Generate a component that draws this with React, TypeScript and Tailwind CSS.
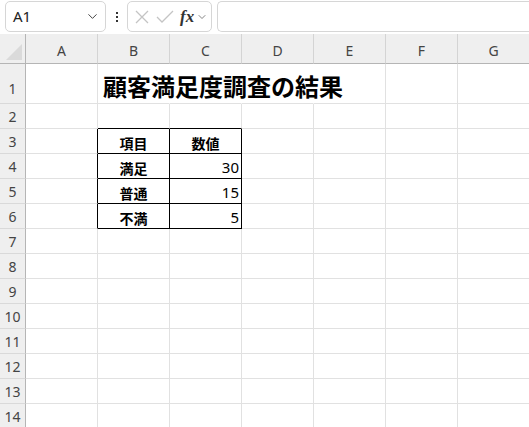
import { ChevronDown } from 'lucide-react';

const cols = ['A', 'B', 'C', 'D', 'E', 'F', 'G'];
const rows = Array.from({ length: 14 }, (_, i) => i + 1);

const font = { fontFamily: '"Noto Sans", "Noto Sans CJK JP", sans-serif' };

type Cell = { text?: string; bold?: boolean; align?: 'left' | 'center' | 'right' };

const data: Record<string, Cell> = {
  B3: { text: '項目', bold: true, align: 'center' },
  C3: { text: '数値', bold: true, align: 'center' },
  B4: { text: '満足', bold: true, align: 'center' },
  C4: { text: '30', align: 'right' },
  B5: { text: '普通', bold: true, align: 'center' },
  C5: { text: '15', align: 'right' },
  B6: { text: '不満', bold: true, align: 'center' },
  C6: { text: '5', align: 'right' },
};

function inTable(c: string, r: number) {
  return (c === 'B' || c === 'C') && r >= 3 && r <= 6;
}

function GridCell({ c, r }: { c: string; r: number }) {
  const key = `${c}${r}`;
  const cell = data[key];
  const tbl = inTable(c, r);
  const rightBlack = tbl || (c === 'A' && r >= 3 && r <= 6);
  const bottomBlack = tbl || ((c === 'B' || c === 'C') && r === 2);
  const hideRight = r === 1 && (c === 'B' || c === 'C' || c === 'D');

  const right = rightBlack ? 'border-r-black' : hideRight ? 'border-r-white' : 'border-r-[#e1e1e1]';
  const bottom = bottomBlack ? 'border-b-black' : 'border-b-[#e1e1e1]';
  const justify =
    cell?.align === 'center' ? 'justify-center' : cell?.align === 'right' ? 'justify-end' : 'justify-start';

  if (key === 'B1') {
    return (
      <div className={`relative z-10 flex items-end overflow-visible border-r border-b ${right} ${bottom} bg-white`}>
        <span
          className="whitespace-nowrap pl-[5px] pb-[5px] text-[24px] font-bold leading-none text-black"
          style={{ fontFamily: '"Noto Sans CJK JP", sans-serif' }}
        >
          顧客満足度調査の結果
        </span>
      </div>
    );
  }

  return (
    <div className={`flex items-end border-r border-b ${right} ${bottom} bg-white ${justify}`}>
      {cell?.text && (
        <span
          className={`px-[2px] pb-[3px] text-[14px] leading-none text-black ${cell.bold ? 'font-bold' : 'text-[15px]'}`}
          style={{ fontFamily: cell.bold ? '"Noto Sans CJK JP", sans-serif' : '"Noto Sans", "Noto Sans CJK JP", sans-serif' }}
        >
          {cell.text}
        </span>
      )}
    </div>
  );
}

export default function App() {
  return (
    <div className="h-[427px] w-[529px] overflow-hidden bg-white" style={font}>
      {/* formula bar */}
      <div className="flex h-[34px] items-start gap-0 pt-[1px]">
        <div className="ml-[5px] flex h-[31px] w-[101px] items-center justify-between rounded-[5px] border border-[#d6d6d6] pl-[7px] pr-[5px]">
          <span className="text-[15px] text-[#222]">A1</span>
          <ChevronDown size={15} strokeWidth={1.6} className="text-[#444]" />
        </div>
        <div className="flex h-[31px] w-[21px] flex-col items-center justify-center gap-[2px]">
          <span className="h-[2px] w-[2px] bg-[#333]" />
          <span className="h-[2px] w-[2px] bg-[#333]" />
          <span className="h-[2px] w-[2px] bg-[#333]" />
        </div>
        <div className="flex h-[31px] w-[85px] items-center rounded-[5px] border border-[#d6d6d6] pl-[5px]">
          <svg width="16" height="16" viewBox="0 0 16 16" className="ml-[1px]">
            <path d="M2 2 L14 14 M14 2 L2 14" stroke="#c4c4c4" strokeWidth="1.3" fill="none" />
          </svg>
          <svg width="18" height="16" viewBox="0 0 18 16" className="ml-[6px]">
            <path d="M1 8 L6 13 L17 2" stroke="#c4c4c4" strokeWidth="1.3" fill="none" />
          </svg>
          <span
            className="ml-[6px] text-[17px] font-bold italic leading-none text-[#333]"
            style={{ fontFamily: '"Liberation Serif", serif' }}
          >
            fx
          </span>
          <ChevronDown size={12} strokeWidth={1.6} className="ml-[2px] text-[#666]" />
        </div>
        <div className="ml-[5px] h-[31px] flex-1 rounded-l-[5px] border border-r-0 border-[#d6d6d6]" />
      </div>

      {/* sheet grid */}
      <div className="grid grid-cols-[26px_repeat(7,72px)] grid-rows-[30px_40px_repeat(13,25px)]">
        <div className="flex items-end justify-end border-r border-b border-r-[#b5b5b5] border-b-[#b5b5b5] bg-[#efefef] pb-[3px] pr-[3px]">
          <svg width="16" height="16" viewBox="0 0 16 16">
            <path d="M16 0 L16 16 L0 16 Z" fill="#dadada" />
          </svg>
        </div>
        {cols.map((c) => (
          <div
            key={c}
            className="flex items-center justify-center border-r border-b border-r-[#d4d4d4] border-b-[#b5b5b5] bg-[#efefef] pt-[3px] text-[14px] text-[#444]"
          >
            {c}
          </div>
        ))}
        {rows.map((r) => (
          <div key={r} className="contents">
            <div
              className={`flex justify-center border-r border-b border-r-[#b5b5b5] border-b-[#d9d9d9] bg-[#efefef] text-[14px] text-[#444] ${r === 1 ? 'items-end pb-[4px]' : 'items-center'}`}
            >
              {r}
            </div>
            {cols.map((c) => (
              <GridCell key={c} c={c} r={r} />
            ))}
          </div>
        ))}
      </div>
    </div>
  );
}
